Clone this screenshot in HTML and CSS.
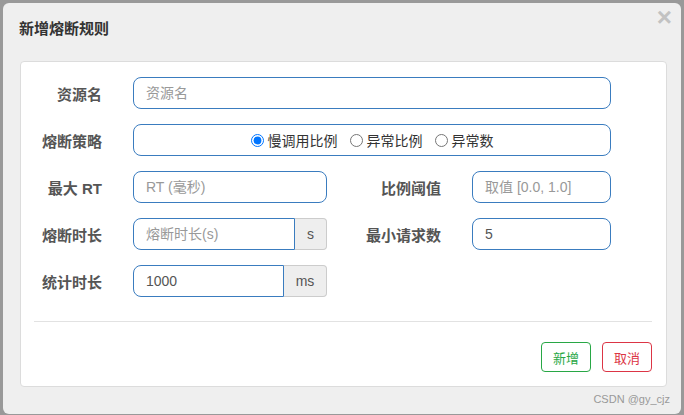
FILE: index.html
```html
<!DOCTYPE html>
<html lang="zh">
<head>
<meta charset="utf-8">
<title>新增熔断规则</title>
<link rel="stylesheet" href="styles.css">
</head>
<body>
<div class="modal">
  <div class="modal-header">
    <h4 class="modal-title">新增熔断规则</h4>
    <span class="close">×</span>
  </div>
  <div class="modal-body">
    <div class="card">
      <div class="form-grid">
        <label class="lbl">资源名</label>
        <input class="ctl span3" type="text" placeholder="资源名">

        <label class="lbl">熔断策略</label>
        <div class="ctl span3 radios">
          <label class="radio"><input type="radio" name="s" checked>慢调用比例</label>
          <label class="radio"><input type="radio" name="s">异常比例</label>
          <label class="radio"><input type="radio" name="s">异常数</label>
        </div>

        <label class="lbl">最大 RT</label>
        <input class="ctl" type="text" placeholder="RT (毫秒)">
        <label class="lbl">比例阈值</label>
        <input class="ctl" type="text" placeholder="取值 [0.0, 1.0]">

        <label class="lbl">熔断时长</label>
        <div class="group">
          <input class="ctl grp-input" type="text" placeholder="熔断时长(s)">
          <span class="addon addon-s">s</span>
        </div>
        <label class="lbl">最小请求数</label>
        <input class="ctl" type="text" value="5">

        <label class="lbl">统计时长</label>
        <div class="group">
          <input class="ctl grp-input" type="text" value="1000">
          <span class="addon addon-ms">ms</span>
        </div>
      </div>
      <div class="divider"></div>
      <div class="actions">
        <button class="btn btn-ok">新增</button>
        <button class="btn btn-cancel">取消</button>
      </div>
    </div>
  </div>
  <div class="watermark">CSDN @gy_cjz</div>
</div>
</body>
</html>
```

FILE: styles.css
```css
* { box-sizing: border-box; }
html, body { margin: 0; padding: 0; }
body {
  width: 684px;
  height: 415px;
  overflow: hidden;
  background: #999;
  font-family: "Liberation Sans", "Noto Sans CJK SC", sans-serif;
  padding: 3px 3px 0 3px;
}
.modal {
  position: relative;
  height: 411px;
  background: #efefef;
  border-radius: 6px;
}
.modal-header {
  display: flex;
  justify-content: space-between;
  align-items: flex-start;
  padding: 16px 9px 22px 16px;
}
.modal-title {
  margin: 0;
  font-size: 15px;
  line-height: 20px;
  font-weight: bold;
  color: #333;
}
.close {
  font-size: 26px;
  line-height: 26px;
  font-weight: bold;
  color: #c2c2c2;
  margin-top: -15px;
}
.modal-body {
  padding: 0 14px 0 17px;
}
.card {
  background: #fff;
  border: 1px solid #dcdcdc;
  border-radius: 4px;
  padding: 15px 14px 14px 13px;
}
.form-grid {
  display: grid;
  grid-template-columns: 69px 194px 85px 139px;
  column-gap: 30px;
  row-gap: 15px;
  align-items: center;
}
.lbl {
  text-align: right;
  font-size: 15px;
  font-weight: bold;
  color: #555;
  white-space: nowrap;
  padding-right: 1px;
}
.ctl {
  height: 32px;
  width: 100%;
  border: 1px solid #3a7cbf;
  border-radius: 8px;
  padding: 0 12px;
  font-family: "Liberation Sans", "Noto Sans CJK SC", sans-serif;
  font-size: 14px;
  color: #555;
  background: #fff;
  outline: none;
}
.ctl::placeholder { color: #999; }
.span3 { grid-column: 2 / 5; }
.radios {
  display: flex;
  justify-content: center;
  align-items: center;
  gap: 12px;
  color: #333;
}
.radio {
  display: flex;
  align-items: center;
  font-size: 14px;
}
.radio input {
  margin: 0 4px 0 0;
  width: 13px;
  height: 13px;
}
.group {
  display: flex;
  height: 32px;
}
.grp-input {
  flex: 1;
  border-radius: 8px 0 0 8px;
}
.addon {
  display: flex;
  align-items: center;
  justify-content: center;
  background: #eee;
  border: 1px solid #ccc;
  border-left: 0;
  border-radius: 0 4px 4px 0;
  font-size: 14px;
  color: #555;
}
.addon-s { width: 32px; }
.addon-ms { width: 43px; }
.divider {
  height: 1px;
  background: #e2e2e2;
  margin-top: 24px;
}
.actions {
  display: flex;
  justify-content: flex-end;
  gap: 11px;
  margin-top: 20px;
}
.btn {
  width: 50px;
  height: 30px;
  background: #fff;
  border-radius: 4px;
  font-family: "Noto Sans CJK SC", sans-serif;
  font-size: 13px;
  padding: 0;
}
.btn-ok { border: 1px solid #28a745; color: #28a745; }
.btn-cancel { border: 1px solid #dc3545; color: #dc3545; }
.watermark {
  position: absolute;
  right: 11px;
  bottom: 8px;
  font-size: 11px;
  line-height: 14px;
  color: #999;
}
```
